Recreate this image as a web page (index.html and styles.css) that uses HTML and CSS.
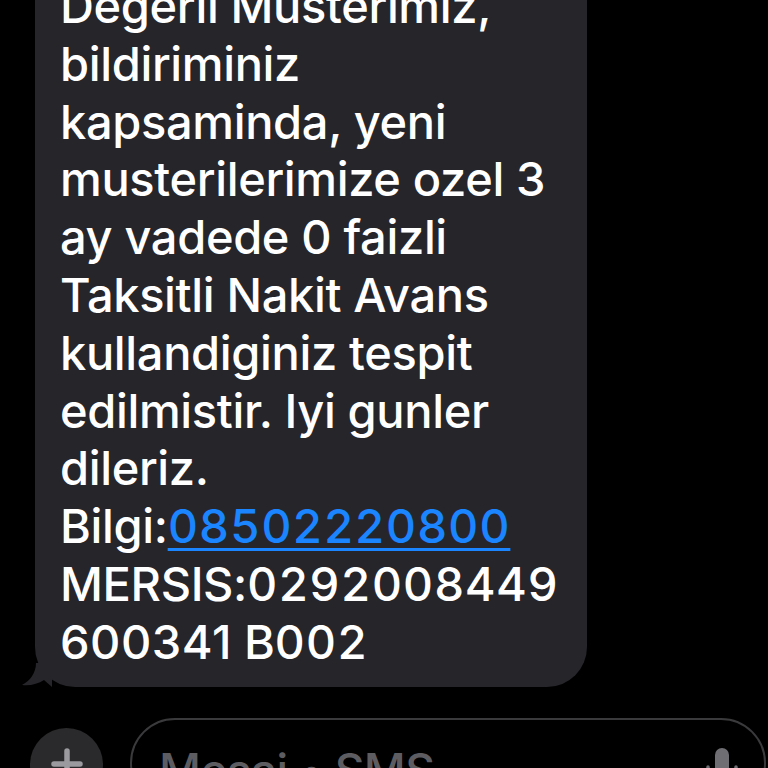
FILE: index.html
```html
<!DOCTYPE html>
<html lang="tr">
<head>
<meta charset="utf-8">
<title>Mesajlar</title>
<link rel="stylesheet" href="styles.css">
</head>
<body>
<div class="screen">
  <div class="thread">
    <div class="bubble">
      <p class="msg">Degerli Musterimiz, bildiriminiz kapsaminda, yeni musterilerimize ozel 3 ay vadede 0 faizli Taksitli Nakit Avans kullandiginiz tespit edilmistir. Iyi gunler dileriz. Bilgi:<a class="link num" href="#">08502220800</a> MERSIS:<span class="num">0292008449</span> <span class="num2">600341</span> B<span class="num">002</span></p>
      <svg class="tail" width="30" height="24" viewBox="0 0 30 24"><path d="M14 0 C14 10 8 18 0 22 C8 23 16 21 22 17 L30 24 L30 0 Z" fill="#26252a"/></svg>
    </div>
  </div>
  <div class="composer">
    <div class="plus">
      <svg width="32" height="32" viewBox="0 0 32 32"><path d="M16 3 V29 M3 16 H29" stroke="#9a9a9f" stroke-width="5.5" stroke-linecap="round"/></svg>
    </div>
    <div class="field">
      <span class="placeholder">Mesaj • SMS</span>
      <svg class="mic" width="40" height="44" viewBox="0 0 40 44"><rect x="13" y="2" width="14" height="28" rx="7" fill="#6e6e73"/><path d="M6 21 C6 32 12 37 20 37 C28 37 34 32 34 21" stroke="#6e6e73" stroke-width="3.5" fill="none" stroke-linecap="round"/></svg>
    </div>
  </div>
</div>
</body>
</html>
```
FILE: styles.css
```css
html, body {
  margin: 0;
  padding: 0;
  background: #000;
}
.screen {
  width: 768px;
  height: 768px;
  overflow: hidden;
  background: #000;
  display: flex;
  flex-direction: column;
  font-family: Inter, "Liberation Sans", sans-serif;
}
.thread {
  padding-left: 35px;
  margin-top: -41px;
}
.bubble {
  position: relative;
  width: 552px;
  box-sizing: border-box;
  background: #26252a;
  border-radius: 40px;
  padding: 18px 16px 16px 25px;
}
.msg {
  margin: 0;
  color: #fff;
  font-size: 47px;
  line-height: 57.8px;
  font-weight: 500;
  letter-spacing: -0.35px;
}
.num {
  font-variant-numeric: tabular-nums;
  letter-spacing: 0.7px;
}
.num2 {
  letter-spacing: 0.5px;
}
.link {
  color: #1a85ff;
  text-decoration: underline;
  text-decoration-thickness: 3px;
  text-underline-offset: 5px;
}
.tail {
  position: absolute;
  left: -13px;
  bottom: 0;
}
.composer {
  display: flex;
  align-items: flex-start;
  gap: 27px;
  padding-left: 30px;
  margin-top: 31px;
}
.plus {
  width: 73px;
  height: 73px;
  border-radius: 50%;
  background: #2a2a2c;
  margin-top: 10px;
  flex: none;
  display: flex;
  align-items: center;
  justify-content: center;
}
.field {
  flex: 1;
  height: 90px;
  border: 2px solid #3a3a3c;
  border-radius: 46px;
  margin-right: 2px;
  display: flex;
  align-items: flex-start;
  justify-content: space-between;
  padding: 22px 22px 0 27px;
  box-sizing: border-box;
}
.placeholder {
  color: #5d5d61;
  font-size: 46px;
  font-weight: 500;
  letter-spacing: -0.6px;
}
.mic {
  margin-top: 4px;
}
```
